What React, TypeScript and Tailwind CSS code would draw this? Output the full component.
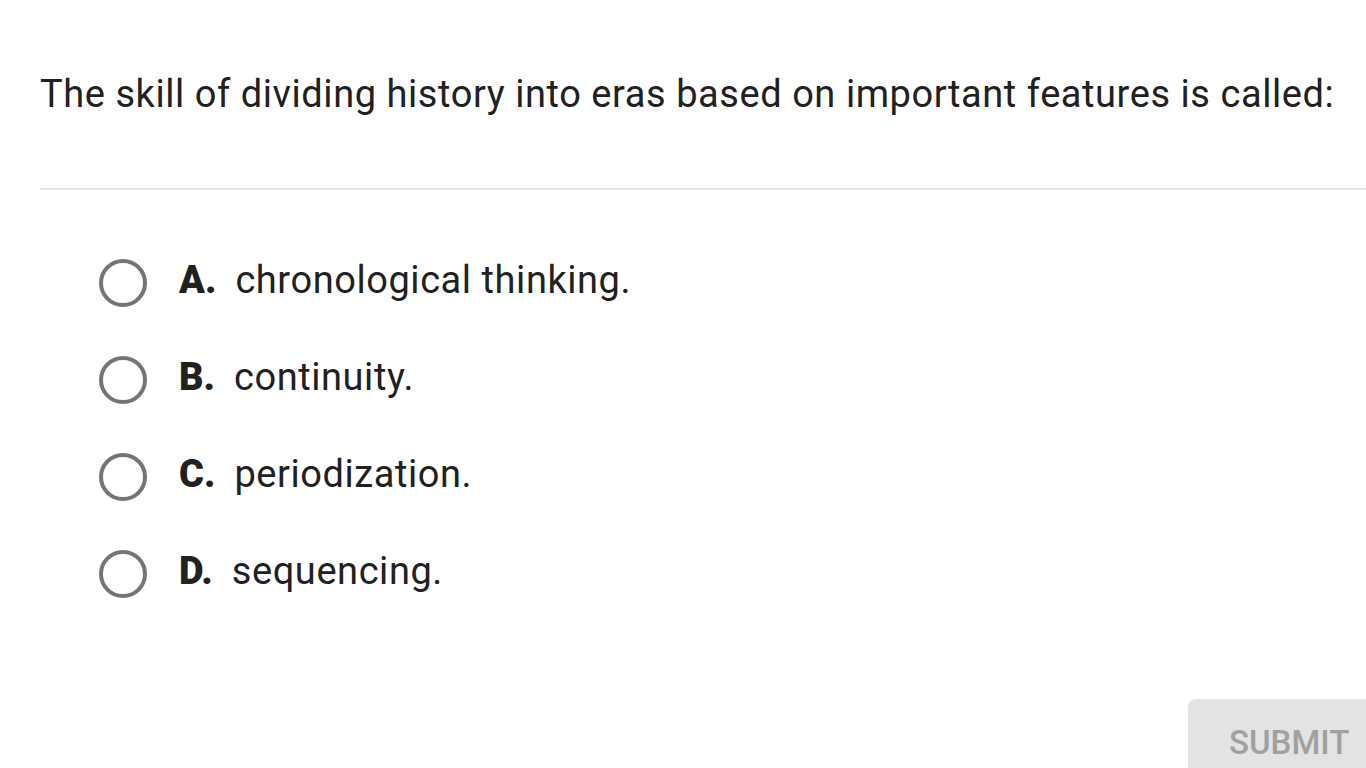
const options = [
  { letter: "A.", text: "chronological thinking." },
  { letter: "B.", text: "continuity." },
  { letter: "C.", text: "periodization." },
  { letter: "D.", text: "sequencing." },
];

const Radio = () => (
  <span className="block w-[48px] h-[48px] rounded-full border-[4px] border-[#757575] shrink-0" />
);

export default function App() {
  return (
    <div
      className="relative w-[1366px] h-[768px] overflow-hidden bg-white text-[#212121]"
      style={{ fontFamily: "Roboto, 'Liberation Sans', sans-serif" }}
    >
      <div className="pl-[40px] pt-[68px]">
        <p className="text-[38px] leading-[52px] tracking-[0.56px] whitespace-nowrap">
          The skill of dividing history into eras based on important features is called:
        </p>
        <div className="mt-[68px] h-[2px] bg-[#e4e4e4]" />
      </div>

      <div className="flex flex-col gap-[49px] pl-[99px] pt-[69px]">
        {options.map((o) => (
          <div key={o.letter} className="flex items-center h-[48px]">
            <Radio />
            <div className="flex items-baseline pb-[6px]">
              <span className="ml-[32px] text-[38px] font-black">{o.letter}</span>
              <span className="ml-[19px] text-[38px] tracking-[0.56px]">{o.text}</span>
            </div>
          </div>
        ))}
      </div>

      <div className="absolute left-[1188px] top-[699px] w-[200px] h-[100px] rounded-tl-[8px] bg-[#e3e3e3] pl-[41px] pt-[24px]">
        <span className="block text-[33px] text-[#a0a0a0] font-medium leading-[40px]">SUBMIT</span>
      </div>
    </div>
  );
}
